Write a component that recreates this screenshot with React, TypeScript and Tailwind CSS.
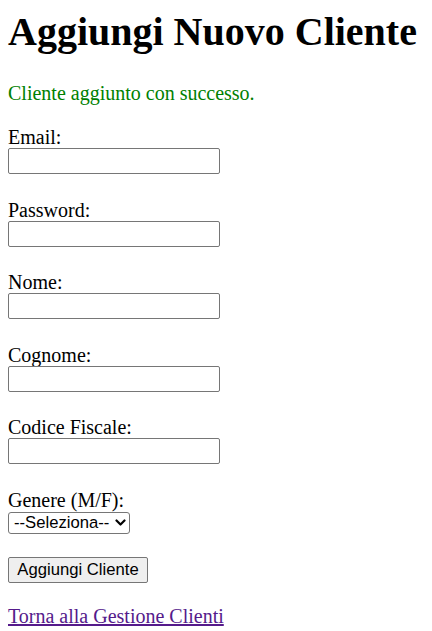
import React from 'react';

const fields = ['Email:', 'Password:', 'Nome:', 'Cognome:', 'Codice Fiscale:'];

export default function App() {
  return (
    <div className="min-h-[631px] bg-white px-2 pt-[9px] text-[20px] text-black font-['Liberation_Serif',serif]">
      <h1 className="text-[40px] font-bold leading-[46px]">Aggiungi Nuovo Cliente</h1>

      <p className="mt-[26.5px] leading-[23px] text-[#008000]">Cliente aggiunto con successo.</p>

      <form className="mt-[21.8px] flex flex-col" onSubmit={(e) => e.preventDefault()}>
        {fields.map((label) => (
          <div key={label} className="mb-[24.5px] flex flex-col items-start">
            <label className="block h-[22px] leading-[23px]">{label}</label>
            <input
              type={label === 'Password:' ? 'password' : 'text'}
              className="h-[26px] w-[212px] rounded-[2px] border border-[#767676] bg-white px-1 text-[16.67px] font-['Liberation_Sans',sans-serif] outline-none"
            />
          </div>
        ))}

        <div className="flex flex-col items-start">
          <label className="block h-[23.3px] leading-[23px]">Genere (M/F):</label>
          <div className="relative flex">
            <select
              defaultValue=""
              className="h-[21.7px] w-[122.3px] appearance-none rounded-[3px] border border-[#767676] bg-white pl-[5px] pr-[18px] py-0 text-[16.67px] leading-[19px] text-black font-['Liberation_Sans',sans-serif]"
            >
              <option value="">--Seleziona--</option>
              <option value="M">M</option>
              <option value="F">F</option>
            </select>
            <svg
              className="pointer-events-none absolute right-[4px] top-[7px] h-[8px] w-[11px]"
              viewBox="0 0 11 8"
              fill="none"
            >
              <path d="M1.5 1.5 L5.5 5.5 L9.5 1.5" stroke="#000" strokeWidth="2.2" strokeLinecap="round" strokeLinejoin="round" />
            </svg>
          </div>
        </div>

        <div className="mt-[23.6px] flex">
          <button
            type="submit"
            className="h-[26px] w-[140px] rounded-[2px] border border-[#767676] bg-[#efefef] text-[16.67px] leading-[20px] text-black font-['Liberation_Sans',sans-serif]"
          >
            Aggiungi Cliente
          </button>
        </div>
      </form>

      <a href="#" className="mt-[21.2px] inline-block leading-[23px] text-[#551a8b] underline">
        Torna alla Gestione Clienti
      </a>
    </div>
  );
}
